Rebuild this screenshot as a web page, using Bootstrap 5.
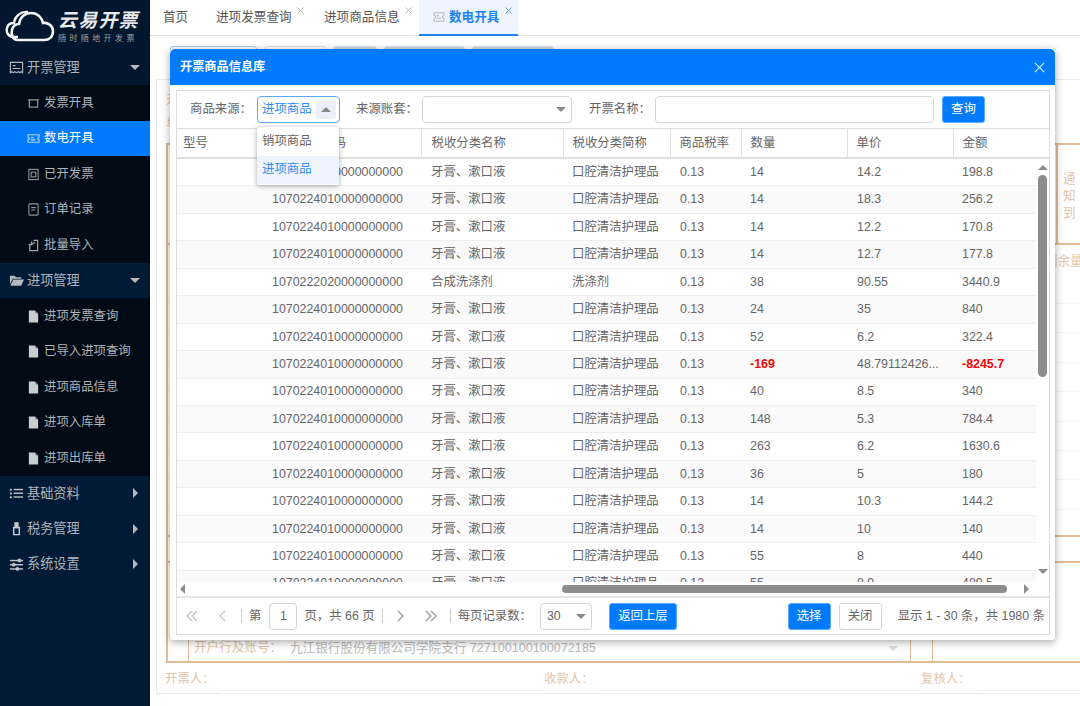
<!DOCTYPE html>
<html lang="zh-CN">
<head>
<meta charset="utf-8">
<title>数电开具</title>
<link rel="stylesheet" href="https://cdn.jsdelivr.net/npm/bootstrap@5.3.0/dist/css/bootstrap.min.css">
<style>
html,body{height:706px;overflow:hidden}
body{font-family:"Liberation Sans","Noto Sans CJK SC",sans-serif;font-size:12.4px;color:#666;background:#fff}
.app-shell{height:706px;width:1080px}
/* sidebar */
.side{width:150px;flex:none;background:#011a35;color:#aeb3b9;height:706px}
.brand{height:50px;padding:9px 0 0 5px;background:#02162e}
.brand-txt{margin-left:3px;line-height:1;padding-top:2px}
.brand-name{font-size:19px;font-weight:700;font-style:italic;color:#e8eaec;letter-spacing:1.2px;height:21px}
.brand-sub{font-size:8px;color:#9aa2aa;letter-spacing:3.4px;margin-top:3px;white-space:nowrap}
.sec-head{height:35.4px;padding:0 9px;font-size:13.2px;gap:3px;white-space:nowrap}
.sec-first{background:#02162e}
.sec-head .ico{width:15px;height:15px;flex:none}
.tri-d{width:0;height:0;border-left:5px solid transparent;border-right:5px solid transparent;border-top:5px solid #b5bac0;margin-left:auto;margin-right:1px}
.tri-r{width:0;height:0;border-top:5px solid transparent;border-bottom:5px solid transparent;border-left:5px solid #b5bac0;margin-left:auto;margin-right:3px}
.sub-list{background:#010a15;padding:0;margin:0}
.sub-item{height:35.5px;padding-left:27px;gap:4px;white-space:nowrap}
.sub-item .ico{width:13px;height:13px;flex:none}
.sub-item.on{background:#007bff;color:#fff}
/* tabs */
.main-col{width:930px;flex:none;height:706px;overflow:hidden}
.tabbar{height:36px;border-bottom:1px solid #ddd;flex:none;font-size:12.6px}
.tabi{height:35px;white-space:nowrap;color:#555}
.tabx{position:absolute;top:7px;width:7px;height:7px;display:block}
.tabx-a{left:81px}
.tabx-b{left:86px}
.t0{padding-left:13px;width:66px}
.t1{width:108px;position:relative}
.t2{width:95px;position:relative}
.t3{width:99px;position:relative;padding-left:14px;gap:4px;background:#eef4fd;color:#1d82f2;font-weight:700;border-bottom:2px solid #1d82f2;height:36px}
/* behind */
.behind{padding:10px 0 0 6px;height:670px;color:#e3c6a9}
.ghost-row{height:24px;padding-left:14px;gap:7px;align-items:flex-start}
.gbtn{height:24px;border:1px solid #dfe3e8;border-radius:3px}
.gb-a{width:87px;border-color:#a9cdf5}.gb-b{width:62px}.gb-c{width:44px;background:#cfd8e3}.gb-d{width:81px;background:#cfd8e3}.gb-e{width:82px;background:#cfd8e3}
.sheet{margin-top:9px;border:1px solid #e9e9e9;border-right:0;height:615px;padding:10px 0 0 9px;width:924px}
.sheet-l1{height:23px;line-height:20px}
.sheet-l2{height:30px;line-height:20px}
.invoice{border:2px solid #e0bd9a;border-right:0;width:920px;height:520px;font-size:12.6px}
.inv-top{height:100px;border-bottom:2px solid #e0bd9a;flex:none}
.inv-fill{width:888px;flex:none}
.inv-note{border-left:2px solid #e0bd9a;padding:26px 0 0 5px;line-height:17px;width:30px}
.inv-goods{height:290px;flex:none}
.inv-goods-h{height:58px;padding:8px 0 0 877px;line-height:16px;white-space:nowrap}
.inv-goods-r{height:29.4px;border-top:1px solid #f3f3f3}
.inv-band{height:28px;border-top:2px solid #e0bd9a;border-bottom:2px solid #e0bd9a;flex:none}
.inv-bot{flex:1 1 0;min-height:0;align-items:flex-end}
.inv-side{width:21px;height:28px;border-right:1px solid #e0bd9a;flex:none}
.inv-acct{width:722px;height:28px;padding:0 7px 0 5px;white-space:nowrap;border-right:1px solid #e0bd9a;flex:none;color:#e3c6a9}
.inv-lab{width:93px;flex:none}
.inv-val{flex:1 1 0;height:22px;padding-left:3px;margin-top:3px;border-bottom:1px solid #eee}
.inv-acct-v{color:#bbb;font-size:12.6px}
.inv-tri{border-left:5px solid transparent;border-right:5px solid transparent;border-top:5px solid #ddd;margin:0 5px 0 auto}
.inv-mid{width:22px;height:28px;border-right:1px solid #e0bd9a;flex:none}
.signs{height:31px;width:926px;white-space:nowrap;margin-left:-1px;padding-top:1px}
.sg1{width:379px}.sg2{width:377px}
.sg-line{border-bottom:1px solid #eee;height:24px;margin-left:6px;flex:1 1 0}
/* modal */
.pick-modal{position:absolute;left:170px;top:49px;width:885px;height:591px;border:0;border-radius:3px;box-shadow:0 2px 9px rgba(0,0,0,.35);background:#fff;z-index:5}
.pick-head{height:36px;background:#007bff;color:#fff;font-weight:700;font-size:12.2px;padding:0 10px;border:0;border-radius:3px 3px 0 0;flex:none}
.pick-panel{margin:5px 5px 5px 6px;border:1px solid #ddd;height:545px;flex:none;position:relative}
.tool{height:37px;padding-left:13px;flex:none}
.lab{width:55px;flex:none;white-space:nowrap;color:#666}
.fld{height:27px;border:1px solid #d6d6d6;border-radius:4px;background:#fff;flex:none}
.fld-on{border-color:#5ba8f5;width:83px;margin-left:12px;margin-right:16px;color:#2f8df0;padding-left:4px;white-space:nowrap}
.fld-up{width:20px;height:18px;background:#eaf0f8;border-radius:3px;margin-left:auto;margin-right:3px;display:flex;align-items:center;justify-content:center}
.tri-up{width:0;height:0;border-left:5px solid transparent;border-right:5px solid transparent;border-bottom:5px solid #888}
.tri-dn{width:0;height:0;border-left:5px solid transparent;border-right:5px solid transparent;border-top:5px solid #888}
.fld-acct{width:150px;margin-left:11px;margin-right:17px;padding-right:5px;justify-content:flex-end}
.fld-name{width:279px;margin-left:11px;margin-right:8px}
.blue-btn{--bs-btn-bg:#007bff;--bs-btn-border-color:#5aa9ff;--bs-btn-padding-x:0;--bs-btn-padding-y:0;--bs-btn-font-size:12.4px;--bs-btn-border-radius:3px;height:27px;flex:none}
.white-btn{--bs-btn-bg:#fff;--bs-btn-border-color:#d8d8d8;--bs-btn-color:#666;--bs-btn-padding-x:0;--bs-btn-padding-y:0;--bs-btn-font-size:12.4px;--bs-btn-border-radius:3px;height:27px;flex:none}
.w43{width:43px}
.w68{width:68px;margin-left:17px}
/* dropdown */
.src-menu{position:absolute;left:80px;top:36px;width:82px;height:57.5px;background:#fff;border-radius:3px;box-shadow:0 1px 5px rgba(0,0,0,.35);z-index:3;padding:0;margin:0}
.src-opt{height:28.5px;padding-left:5px;white-space:nowrap;color:#666}
.src-opt.cur{background:#eef4fd;color:#2f8df0}
/* table */
.gd{table-layout:fixed;border-collapse:collapse;margin:0;color:#666;font-size:12.4px}
.gd-head{width:872px;flex:none}
.gd-body{width:859px;flex:none}
.gd>thead>tr>th{height:29px;padding:1px 0 0 9px;vertical-align:middle;font-weight:400;border-top:1px solid #ddd;border-bottom:2px solid #e0e0e0;border-right:1px solid #e0e0e0;white-space:nowrap;background:#fff;color:#666;box-shadow:none}
.gd>thead>tr>th:first-child{padding-left:6px}
.gd>thead>tr>th:nth-child(3){padding-left:10px}
.gd>thead>tr>th:last-child{border-right:0}
.gd>tbody>tr>td{height:27.45px;padding:0 0 0 10px;vertical-align:middle;border:0;border-bottom:1px solid #eee;white-space:nowrap;overflow:hidden;text-overflow:ellipsis;background:#fff;color:#666;box-shadow:none}
.gd>tbody>tr>td:nth-child(4),.gd>tbody>tr>td:nth-child(6),.gd>tbody>tr>td:nth-child(8){padding-left:9px}
.gd>tbody>tr:nth-child(even)>td{background:#fafafa}
.gd>tbody>tr>td.neg{color:#f00;font-weight:700}
.c1{width:85px}.c2{width:159px}.c3{width:142px}.c4{width:107px}.c5{width:71px}.c6{width:106px}.c7{width:106px}
.body-wrap{height:423.500px;flex:none;overflow:hidden}
.clip{width:859px;height:423.500px;overflow:hidden;flex:none}
.v-lane{width:13px;flex:none;background:#fff;height:423px;padding-top:6px;align-items:center}
.v-thumb{width:9px;height:202px;background:#8c8c8c;border-radius:5px;margin-top:5px;flex:none}
.v-tri-u{border-left:5px solid transparent;border-right:5px solid transparent;border-bottom:5px solid #8c8c8c;width:0;height:0;flex:none}
.v-tri-d{border-left:5px solid transparent;border-right:5px solid transparent;border-top:5px solid #8c8c8c;width:0;height:0;flex:none;margin-top:192px}
.h-lane{height:14px;flex:none;padding-left:3px;background:#fff}
.h-tri-l{border-top:5px solid transparent;border-bottom:5px solid transparent;border-right:5px solid #8c8c8c;width:0;height:0;flex:none}
.h-tri-r{border-top:5px solid transparent;border-bottom:5px solid transparent;border-left:5px solid #8c8c8c;width:0;height:0;flex:none;margin-left:17px}
.h-thumb{width:445px;height:8px;background:#8c8c8c;border-radius:4px;margin-left:377px;flex:none}
.pager{height:39px;border-top:2px solid #e6e6e6;flex:none;white-space:nowrap;padding-bottom:1px}
.pg-ic{width:30px;height:27px;flex:none;display:flex;align-items:center;justify-content:center}
.pg-ic svg{width:14px;height:14px}
.pg-sep{width:1px;height:14px;background:#ccc;flex:none}
.pg-num{width:28px;margin:0 7px 0 8px;justify-content:center}
.pg-size{width:52px;padding:0 5px 0 6px;justify-content:space-between;margin-left:8px}
.ms4{margin-left:4px}.ms3{margin-left:3px}.ms7{margin-left:7px}.ms8{margin-left:8px}
.pg-info{margin-left:16px}
.push-r{margin-left:auto}
</style>
</head>
<body>
<div class="app-shell d-flex position-relative">
  <aside class="side d-flex flex-column">
    <div class="brand d-flex">
      <svg width="50" height="34" viewBox="0 0 50 34" fill="none" stroke="#f2f4f6" stroke-width="2.4" class="flex-none">
        <path d="M13 28 H9 C3 28 1 23 2 19 C3 15 6 14 9 14 C10 7 16 2 23 3"/>
        <path d="M13 31 C7 31 6 25 7 21 C8 17 11 15 14 15 C15 8 20 4 26 4 C33 4 37 9 38 14 C43 13 48 17 48 22 C48 28 44 31 39 31 Z" stroke-width="2.6"/>
      </svg>
      <div class="brand-txt">
        <div class="brand-name">云易开票</div>
        <div class="brand-sub">随时随地开发票</div>
      </div>
    </div>
    <div class="sec-head sec-first d-flex align-items-center">
      <svg class="ico" viewBox="0 0 16 16" fill="none" stroke="#b5bac0" stroke-width="1.2"><path d="M1.5 2.5h13v11l-1.5-1-1.5 1-1.5-1-2 1-2-1-1.500 1-1.500-1-1.500 1z"/><path d="M4 6h3M4 9h8"/></svg>
      <span>开票管理</span><i class="tri-d"></i>
    </div>
    <div class="sub-list">
      <div class="sub-item d-flex align-items-center"><svg class="ico" viewBox="0 0 14 14" fill="none" stroke="#8f959b" stroke-width="1.3"><path d="M1 3h12M2.5 3v8h9V3"/></svg><span>发票开具</span></div>
      <div class="sub-item on d-flex align-items-center"><svg class="ico" viewBox="0 0 14 14" fill="none" stroke="#b9d8ff" stroke-width="1.2"><path d="M1 3h12v2.6a1.4 1.4 0 0 0 0 2.8V11H1V8.400a1.400 1.400 0 0 0 0-2.800z"/><path d="M4 6h3M4 8.500h5"/></svg><span>数电开具</span></div>
      <div class="sub-item d-flex align-items-center"><svg class="ico" viewBox="0 0 14 14" fill="none" stroke="#8f959b" stroke-width="1.200"><rect x="2" y="1.500" width="10" height="11"/><rect x="4.500" y="4.500" width="5" height="5"/></svg><span>已开发票</span></div>
      <div class="sub-item d-flex align-items-center"><svg class="ico" viewBox="0 0 14 14" fill="none" stroke="#8f959b" stroke-width="1.200"><rect x="2" y="1" width="10" height="12" rx="1"/><path d="M4.500 5h5M4.500 7.500h4"/></svg><span>订单记录</span></div>
      <div class="sub-item d-flex align-items-center"><svg class="ico" viewBox="0 0 14 14" fill="none" stroke="#a2a7ad" stroke-width="1.300"><path d="M3 5V12.500h8.500V1.500H7"/><path d="M5 2.500V6H1.500"/><path d="M8.500 3.500L5 6"/></svg><span>批量导入</span></div>
    </div>
    <div class="sec-head d-flex align-items-center">
      <svg class="ico" viewBox="0 0 16 16" fill="#b5bac0"><path d="M1 3h5l1.500 1.500H13V6H4L1 12z"/><path d="M4.500 7H16l-3 6.500H1.500z"/></svg>
      <span>进项管理</span><i class="tri-d"></i>
    </div>
    <div class="sub-list">
      <div class="sub-item d-flex align-items-center"><svg class="ico" viewBox="0 0 14 14" fill="#c9ccd0"><path d="M2 .5h6.500L12 4v9.500H2z"/><path d="M9 .5V3.500h3z" fill="#7d6f85"/></svg><span>进项发票查询</span></div>
      <div class="sub-item d-flex align-items-center"><svg class="ico" viewBox="0 0 14 14" fill="#c9ccd0"><path d="M2 .5h6.500L12 4v9.500H2z"/><path d="M9 .5V3.500h3z" fill="#7d6f85"/></svg><span>已导入进项查询</span></div>
      <div class="sub-item d-flex align-items-center"><svg class="ico" viewBox="0 0 14 14" fill="#c9ccd0"><path d="M2 .5h6.500L12 4v9.500H2z"/><path d="M9 .5V3.500h3z" fill="#7d6f85"/></svg><span>进项商品信息</span></div>
      <div class="sub-item d-flex align-items-center"><svg class="ico" viewBox="0 0 14 14" fill="#c9ccd0"><path d="M2 .5h6.500L12 4v9.500H2z"/><path d="M9 .5V3.500h3z" fill="#7d6f85"/></svg><span>进项入库单</span></div>
      <div class="sub-item d-flex align-items-center"><svg class="ico" viewBox="0 0 14 14" fill="#c9ccd0"><path d="M2 .5h6.500L12 4v9.500H2z"/><path d="M9 .5V3.500h3z" fill="#7d6f85"/></svg><span>进项出库单</span></div>
    </div>
    <div class="sec-head d-flex align-items-center">
      <svg class="ico" viewBox="0 0 16 16" fill="#c0c4c9"><rect x="1" y="3" width="2" height="2"/><rect x="1" y="7" width="2" height="2"/><rect x="1" y="11" width="2" height="2"/><rect x="5" y="3" width="10" height="1.500"/><rect x="5" y="7" width="10" height="1.500"/><rect x="5" y="11" width="10" height="1.500"/></svg>
      <span>基础资料</span><i class="tri-r"></i>
    </div>
    <div class="sec-head d-flex align-items-center">
      <svg class="ico" viewBox="0 0 16 16" fill="none" stroke="#c9ccd0" stroke-width="1.500"><path d="M5 7h6v7.500H5z"/><path d="M6.500 2h3v5h-3z" fill="#c9ccd0"/></svg>
      <span>税务管理</span><i class="tri-r"></i>
    </div>
    <div class="sec-head d-flex align-items-center">
      <svg class="ico" viewBox="0 0 16 16" fill="#c0c4c9"><rect x="1" y="3" width="14" height="1.500"/><rect x="1" y="7.500" width="14" height="1.500"/><rect x="1" y="12" width="14" height="1.500"/><circle cx="11" cy="3.700" r="2"/><circle cx="5" cy="8.200" r="2"/><circle cx="9" cy="12.700" r="2"/></svg>
      <span>系统设置</span><i class="tri-r"></i>
    </div>
  </aside>

  <main class="main-col d-flex flex-column">
    <div class="tabbar d-flex">
      <div class="tabi t0 d-flex align-items-center">首页</div>
      <div class="tabi t1 d-flex align-items-center"><span>进项发票查询</span><svg class="tabx tabx-a" viewBox="0 0 7 7" stroke="#bbb"><path d="M.5.500l6 6M6.500.500l-6 6"/></svg></div>
      <div class="tabi t2 d-flex align-items-center"><span>进项商品信息</span><svg class="tabx tabx-a" viewBox="0 0 7 7" stroke="#bbb"><path d="M.5.500l6 6M6.500.500l-6 6"/></svg></div>
      <div class="tabi t3 d-flex align-items-center">
        <svg width="12" height="10" viewBox="0 0 14 12" fill="none" stroke="#b4b9c0" stroke-width="1.200"><path d="M1 1h12v3a2 2 0 0 0 0 4v3H1V8a2 2 0 0 0 0-4z"/><path d="M4 4.500h3M4 7.500h5"/></svg>
        <span>数电开具</span><svg class="tabx tabx-b" viewBox="0 0 7 7" stroke="#5aa5f5"><path d="M.5.500l6 6M6.500.500l-6 6"/></svg>
      </div>
    </div>
    <div class="behind">
      <div class="ghost-row d-flex"><div class="gbtn gb-a"></div><div class="gbtn gb-b"></div><div class="gbtn gb-c"></div><div class="gbtn gb-d"></div><div class="gbtn gb-e"></div></div>
      <div class="sheet">
        <div class="sheet-l1">开票信息</div>
        <div class="sheet-l2">单据信息</div>
        <div class="invoice d-flex flex-column">
          <div class="inv-top d-flex"><div class="inv-fill"></div><div class="inv-note">通<br>知<br>到</div></div>
          <div class="inv-goods">
            <div class="inv-goods-h">剩余量</div>
            <div class="inv-goods-r"></div><div class="inv-goods-r"></div><div class="inv-goods-r"></div><div class="inv-goods-r"></div><div class="inv-goods-r"></div><div class="inv-goods-r"></div><div class="inv-goods-r"></div><div class="inv-goods-r"></div>
          </div>
          <div class="inv-band"></div>
          <div class="inv-bot d-flex">
            <div class="inv-side"></div>
            <div class="inv-acct d-flex align-items-center"><span class="inv-lab">开户行及账号：</span><div class="inv-val d-flex align-items-center"><span class="inv-acct-v">九江银行股份有限公司学院支行 727100100100072185</span><i class="inv-tri"></i></div></div>
            <div class="inv-mid"></div>
          </div>
        </div>
        <div class="signs d-flex">
          <div class="sg1 d-flex align-items-center"><span>开票人：</span><div class="sg-line"></div></div>
          <div class="sg2 d-flex align-items-center"><span>收款人：</span><div class="sg-line"></div></div>
          <div class="d-flex flex-grow-1 align-items-center"><span>复核人：</span><div class="sg-line"></div></div>
        </div>
      </div>
    </div>
  </main>

  <section class="card pick-modal d-flex flex-column">
    <div class="card-header pick-head d-flex align-items-center justify-content-between">
      <span>开票商品信息库</span>
      <svg width="11" height="11" viewBox="0 0 11 11" stroke="#d5e8ff" stroke-width="1.200"><path d="M.8.8l9.400 9.400M10.200.8L.8 10.200"/></svg>
    </div>
    <div class="pick-panel d-flex flex-column">
      <div class="tool d-flex align-items-center">
        <span class="lab">商品来源：</span>
        <div class="fld fld-on d-flex align-items-center"><span>进项商品</span><span class="fld-up"><i class="tri-up"></i></span></div>
        <span class="lab">来源账套：</span>
        <div class="fld fld-acct d-flex align-items-center"><i class="tri-dn"></i></div>
        <span class="lab">开票名称：</span>
        <input class="fld fld-name" type="text" aria-label="开票名称">
        <button class="btn btn-primary blue-btn w43" type="button">查询</button>
      </div>
      <ul class="src-menu list-unstyled">
        <li class="src-opt d-flex align-items-center">销项商品</li>
        <li class="src-opt cur d-flex align-items-center">进项商品</li>
      </ul>
      <table class="table gd gd-head">
        <colgroup><col class="c1"><col class="c2"><col class="c3"><col class="c4"><col class="c5"><col class="c6"><col class="c7"><col></colgroup>
        <thead><tr><th>型号</th><th>税收分类编码</th><th>税收分类名称</th><th>税收分类简称</th><th>商品税率</th><th>数量</th><th>单价</th><th>金额</th></tr></thead>
      </table>
      <div class="body-wrap d-flex">
        <div class="clip">
        <table class="table gd gd-body">
          <colgroup><col class="c1"><col class="c2"><col class="c3"><col class="c4"><col class="c5"><col class="c6"><col class="c7"><col></colgroup>
          <tbody>
            <tr><td></td><td>1070224010000000000</td><td>牙膏、漱口液</td><td>口腔清洁护理品</td><td>0.13</td><td>14</td><td>14.2</td><td>198.8</td></tr>
            <tr><td></td><td>1070224010000000000</td><td>牙膏、漱口液</td><td>口腔清洁护理品</td><td>0.13</td><td>14</td><td>18.3</td><td>256.2</td></tr>
            <tr><td></td><td>1070224010000000000</td><td>牙膏、漱口液</td><td>口腔清洁护理品</td><td>0.13</td><td>14</td><td>12.2</td><td>170.8</td></tr>
            <tr><td></td><td>1070224010000000000</td><td>牙膏、漱口液</td><td>口腔清洁护理品</td><td>0.13</td><td>14</td><td>12.7</td><td>177.8</td></tr>
            <tr><td></td><td>1070222020000000000</td><td>合成洗涤剂</td><td>洗涤剂</td><td>0.13</td><td>38</td><td>90.55</td><td>3440.9</td></tr>
            <tr><td></td><td>1070224010000000000</td><td>牙膏、漱口液</td><td>口腔清洁护理品</td><td>0.13</td><td>24</td><td>35</td><td>840</td></tr>
            <tr><td></td><td>1070224010000000000</td><td>牙膏、漱口液</td><td>口腔清洁护理品</td><td>0.13</td><td>52</td><td>6.2</td><td>322.4</td></tr>
            <tr><td></td><td>1070224010000000000</td><td>牙膏、漱口液</td><td>口腔清洁护理品</td><td>0.13</td><td class="neg">-169</td><td>48.79112426...</td><td class="neg">-8245.7</td></tr>
            <tr><td></td><td>1070224010000000000</td><td>牙膏、漱口液</td><td>口腔清洁护理品</td><td>0.13</td><td>40</td><td>8.5</td><td>340</td></tr>
            <tr><td></td><td>1070224010000000000</td><td>牙膏、漱口液</td><td>口腔清洁护理品</td><td>0.13</td><td>148</td><td>5.3</td><td>784.4</td></tr>
            <tr><td></td><td>1070224010000000000</td><td>牙膏、漱口液</td><td>口腔清洁护理品</td><td>0.13</td><td>263</td><td>6.2</td><td>1630.6</td></tr>
            <tr><td></td><td>1070224010000000000</td><td>牙膏、漱口液</td><td>口腔清洁护理品</td><td>0.13</td><td>36</td><td>5</td><td>180</td></tr>
            <tr><td></td><td>1070224010000000000</td><td>牙膏、漱口液</td><td>口腔清洁护理品</td><td>0.13</td><td>14</td><td>10.3</td><td>144.2</td></tr>
            <tr><td></td><td>1070224010000000000</td><td>牙膏、漱口液</td><td>口腔清洁护理品</td><td>0.13</td><td>14</td><td>10</td><td>140</td></tr>
            <tr><td></td><td>1070224010000000000</td><td>牙膏、漱口液</td><td>口腔清洁护理品</td><td>0.13</td><td>55</td><td>8</td><td>440</td></tr>
            <tr><td></td><td>1070224010000000000</td><td>牙膏、漱口液</td><td>口腔清洁护理品</td><td>0.13</td><td>55</td><td>8.9</td><td>489.5</td></tr>
          </tbody>
        </table>
        </div>
        <div class="v-lane d-flex flex-column"><i class="v-tri-u"></i><div class="v-thumb"></div><i class="v-tri-d"></i></div>
      </div>
      <div class="h-lane d-flex align-items-center"><i class="h-tri-l"></i><div class="h-thumb"></div><i class="h-tri-r"></i></div>
      <div class="pager d-flex align-items-center">
        <span class="pg-ic"><svg viewBox="0 0 14 14" fill="none" stroke="#c4c4c4" stroke-width="1.300"><path d="M7 2L2 7l5 5M12 2L7 7l5 5"/></svg></span>
        <span class="pg-ic"><svg viewBox="0 0 14 14" fill="none" stroke="#c4c4c4" stroke-width="1.300"><path d="M10 2L5 7l5 5"/></svg></span>
        <span class="pg-sep ms4"></span>
        <span class="ms7">第</span>
        <div class="fld pg-num d-flex align-items-center">1</div>
        <span>页，共 66 页</span>
        <span class="pg-sep ms7"></span>
        <span class="pg-ic ms3"><svg viewBox="0 0 14 14" fill="none" stroke="#999" stroke-width="1.300"><path d="M4 2l5 5-5 5"/></svg></span>
        <span class="pg-ic"><svg viewBox="0 0 14 14" fill="none" stroke="#999" stroke-width="1.300"><path d="M2 2l5 5-5 5M7 2l5 5-5 5"/></svg></span>
        <span class="pg-sep ms4"></span>
        <span class="ms7">每页记录数：</span>
        <div class="fld pg-size d-flex align-items-center"><span>30</span><i class="tri-dn"></i></div>
        <button class="btn btn-primary blue-btn w68" type="button">返回上层</button>
        <button class="btn btn-primary blue-btn w43 push-r" type="button">选择</button>
        <button class="btn white-btn w43 ms8" type="button">关闭</button>
        <span class="pg-info me-1">显示 1 - 30 条，共 1980 条</span>
      </div>
    </div>
  </section>
</div>
</body>
</html>
